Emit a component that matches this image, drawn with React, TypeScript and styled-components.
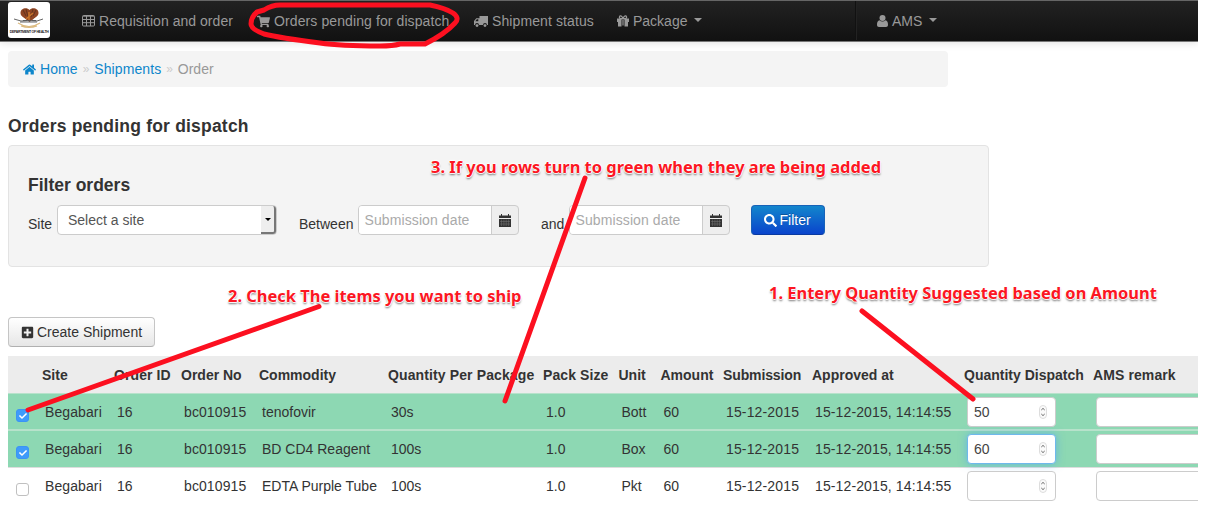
import React from 'react';
import styled, { createGlobalStyle, css } from 'styled-components';
import { FaShoppingCart, FaHome, FaSearch, FaPlusSquare, FaCheck } from 'react-icons/fa';

const GlobalStyle = createGlobalStyle`
  *, *::before, *::after { box-sizing: border-box; }
  body {
    margin: 0;
    background: #fff;
    color: #333;
    font: 14px/20px "Liberation Sans", Arial, sans-serif;
    overflow: hidden;
  }
`;

const Page = styled.div`
  position: relative;
  width: 1229px;
  height: 511px;
  overflow: hidden;
`;

const Screen = styled.div`
  width: 1198px;
  height: 511px;
  overflow: hidden;
`;

const Navbar = styled.nav`
  display: flex;
  height: 42px;
  width: 1198px;
  border-top: 1px solid #666;
  border-bottom: 1px solid #777;
  background: linear-gradient(#222, #111);
  box-shadow: 0 1px 8px rgba(0, 0, 0, 0.12);
  color: #999;
`;

const Brand = styled.div`
  flex: none;
  width: 42px;
  height: 36px;
  margin: 1px 0 0 8px;
  background: #fff;
  border-radius: 3px;
  overflow: hidden;
`;

const NavItem = styled.a<{ $left: number; $gap?: number }>`
  display: flex;
  align-items: center;
  gap: ${(p) => p.$gap ?? 4}px;
  height: 40px;
  margin-left: ${(p) => p.$left}px;
  white-space: nowrap;
  svg { flex: none; }
`;

const NavLabel = styled.span<{ $width: number; $track?: number }>`
  width: ${(p) => p.$width}px;
  letter-spacing: ${(p) => p.$track ?? 0}px;
`;

const Divider = styled.span`
  width: 2px;
  height: 39px;
  margin-left: 153px;
  background: #111;
  border-right: 1px solid #222;
`;

const Caret = styled.i`
  width: 0;
  height: 0;
  margin: -2px 0 0 3px;
  border: 4px solid transparent;
  border-top-color: #999;
  border-bottom: 0;
`;

const Breadcrumb = styled.div`
  display: flex;
  align-items: center;
  width: 940px;
  height: 36px;
  margin: 9px 0 0 8px;
  padding: 0 15px;
  background: #f4f4f4;
  border-radius: 4px;
  color: #999;
`;

const Crumb = styled.a`
  display: flex;
  align-items: center;
  gap: 4px;
  color: #0d86cb;
  letter-spacing: 0.1px;
`;

const Sep = styled.span`
  width: 16.5px;
  text-align: center;
  color: #ccc;
  font-size: 12px;
`;

const Title = styled.h1`
  margin: 28px 0 0 8px;
  font-size: 17.5px;
  line-height: 22px;
  letter-spacing: 0.2px;
`;

const Well = styled.section`
  width: 981px;
  height: 122px;
  margin: 8px 0 0 8px;
  padding: 28px 19px;
  background: #f4f4f4;
  border: 1px solid #e3e3e3;
  border-radius: 4px;
`;

const WellTitle = styled.h2`
  margin: 0 0 9px;
  font-size: 17.5px;
  line-height: 22px;
`;

const FilterRow = styled.div`
  display: flex;
  align-items: flex-start;
`;

const Label = styled.label<{ $width: number; $left?: number }>`
  width: ${(p) => p.$width}px;
  margin: 9px 0 0 ${(p) => p.$left ?? 0}px;
`;

const Select = styled.div`
  display: flex;
  justify-content: space-between;
  width: 220px;
  height: 30px;
  padding-left: 10px;
  line-height: 29px;
  background: #fff;
  border: 1px solid #ccc;
  border-radius: 4px;
  color: #555;
`;

const SelectButton = styled.span`
  display: flex;
  align-items: center;
  justify-content: center;
  width: 15px;
  background: #eee;
  border-right: 2px solid #777;
  border-bottom: 2px solid #777;
  border-radius: 0 3px 3px 0;
  &::after {
    content: '';
    border: 3px solid transparent;
    border-top-color: #000;
    border-bottom: 0;
  }
`;

const DateField = styled.div`
  display: flex;
  width: 161px;
  height: 30px;
  border: 1px solid #ccc;
  border-radius: 4px;
  background: #eee;
  overflow: hidden;
`;

const DateInput = styled.span`
  width: 133px;
  padding-left: 5.5px;
  line-height: 29px;
  letter-spacing: 0.1px;
  background: #fff;
  border-right: 1px solid #ccc;
  color: #aaa;
`;

const DateAddon = styled.span`
  display: flex;
  flex: 1;
  align-items: center;
  justify-content: center;
`;

const buttonBase = css`
  display: flex;
  align-items: center;
  gap: 3px;
  height: 30px;
  padding: 0 0 0 12px;
  border-radius: 4px;
  font: inherit;
`;

const FilterButton = styled.button`
  ${buttonBase}
  width: 74px;
  margin-left: 20.5px;
  border: 1px solid #1762b8;
  border-bottom-color: #0a3aa0;
  background: linear-gradient(#1386cc, #0a44cc);
  color: #fff;
  text-shadow: 0 -1px 0 rgba(0, 0, 0, 0.25);
`;

const CreateButton = styled.button`
  ${buttonBase}
  width: 147px;
  margin: 50px 0 0 8px;
  border: 1px solid #c5c5c5;
  border-bottom-color: #b0b0b0;
  background: linear-gradient(#fff, #e6e6e6);
  color: #333;
`;

const Table = styled.div`
  width: 1300px;
  margin: 9px 0 0 8px;
`;

const Row = styled.div<{ $state?: 'head' | 'checked'; $first?: boolean }>`
  display: grid;
  grid-template-columns: 34px 72px 67px 78px 129px 155px 75.5px 42px 62.5px 89px 152px 129px 1fr;
  height: 37px;
  line-height: 37px;
  border-top: 1px solid #ddd;
  white-space: nowrap;
  ${(p) =>
    p.$state === 'head' &&
    css`
      font-weight: bold;
      background: #ececec;
      border-top-color: #ececec;
    `}
  ${(p) =>
    p.$state === 'checked' &&
    css`
      height: ${p.$first ? 36 : 38}px;
      background: #8dd8b3;
      border-top: ${p.$first ? 1 : 2}px solid #b7e2cb;
    `}
`;

const Cell = styled.span<{ $track?: number }>`
  padding-left: 3px;
  letter-spacing: ${(p) => p.$track ?? 0}px;
`;

const HeadCell = styled.span<{ $track?: number }>`
  letter-spacing: ${(p) => p.$track ?? 0}px;
`;

const Checkbox = styled.span<{ $on: boolean }>`
  display: flex;
  align-items: center;
  justify-content: center;
  width: 13px;
  height: 13px;
  margin: 15px 0 0 8px;
  border: 1px solid ${(p) => (p.$on ? '#3b94f5' : '#c0c0c0')};
  border-radius: 3px;
  background: ${(p) => (p.$on ? '#3f9bfa' : '#fff')};
  color: #fff;
`;

const Input = styled.span<{ $width: number; $focus?: boolean }>`
  display: flex;
  align-items: center;
  justify-content: space-between;
  width: ${(p) => p.$width}px;
  height: 30px;
  margin: 3px 0 0 3px;
  padding: 0 8px 0 6px;
  border: 1px solid ${(p) => (p.$focus ? '#6fb8ec' : '#ccc')};
  border-radius: 4px;
  background: #fff;
  box-shadow: ${(p) => (p.$focus ? '0 0 8px rgba(82, 168, 236, 0.7)' : 'none')};
  color: #444;
`;

const Notes = styled.div`
  position: absolute;
  inset: 0;
`;

const Note = styled.span<{ $x: number; $y: number }>`
  position: absolute;
  left: ${(p) => p.$x}px;
  top: ${(p) => p.$y}px;
  font: bold 16.45px/22px "Noto Sans", sans-serif;
  color: #fc1623;
  white-space: nowrap;
  text-shadow: -1px 0 1px #fff, 1px 0 1px #fff, 0 -1px 1px #fff, 0 1px 1px #fff, 0 2px 2px rgba(0, 0, 0, 0.55);
`;

const Strokes = styled.svg`
  position: absolute;
  inset: 0;
  fill: none;
  stroke: #fc1020;
  stroke-linecap: round;
  stroke-linejoin: round;
`;

const Emblem = () => (
  <svg width="42" height="36" viewBox="0 0 42 36">
    <path d="M21.500 8C19 5 12.500 6 12.500 11c0 3 3 4 5 6l4 3 4-3c2-2 5-3 5-6 0-5-6.500-6-9-3z" fill="#8f4524" />
    <path d="M15 8l3 6M18 7l2 8M28 8l-3 6M25 7l-2 8" stroke="#58301c" strokeWidth=".8" />
    <path d="M21 10v8M18 17l7-6" stroke="#c9762c" strokeWidth="1.5" />
    <path d="M6 17l7 2 8-.5 8 .5 6-2M12 20h17M15 18.500h4M24 18.500h4" fill="none" stroke="#555" strokeWidth=".9" />
    <path d="M10 21q11 7 22 0M13 24q8 3 16 0" fill="none" stroke="#dcbb80" strokeWidth="1.2" />
    <text x="1.8" y="30.8" fontFamily="Liberation Sans" fontWeight="bold" fontSize="3.5" textLength="39" fill="#222">
      DEPARTMENT OF HEALTH
    </text>
  </svg>
);

const TableIcon = () => (
  <svg width="13" height="12" viewBox="0 0 13 12" fill="none" stroke="currentColor">
    <rect x=".5" y=".5" width="12" height="10.5" rx="1" />
    <path d="M1 1.2h11M1 4.5h11M1 7.7h11M4.5 1v10M8.5 1v10" />
  </svg>
);

const TruckIcon = () => (
  <svg width="14" height="13" viewBox="0 0 14 13" fill="currentColor">
    <path d="M5.5 1H14v9h-1a2 2 0 0 0-4 0H5a2 2 0 0 0-4 0H0V6l2.3-2.7H5.5zM1.3 6.2h3V4.3H2.8z" fillRule="evenodd" />
    <circle cx="3" cy="10.6" r="1.4" />
    <circle cx="11" cy="10.6" r="1.4" />
  </svg>
);

const GiftIcon = () => (
  <svg width="12" height="12" viewBox="0 0 12 12" fill="currentColor">
    <path d="M0 3.500h12V7h-1v4.500H7.500v-7h-3v7H1V7H0z" />
    <path d="M5.400 5h1.200v5.500H5.400z" />
    <path d="M5.800 3.500H3.600a1.300 1.300 0 1 1 1-2.200L6 3l1.400-1.700a1.300 1.300 0 1 1 1 2.200z" fill="none" stroke="currentColor" strokeWidth="1.2" />
  </svg>
);

const UserIcon = () => (
  <svg width="11" height="12" viewBox="0 0 11 12" fill="currentColor">
    <circle cx="5.500" cy="3" r="3" />
    <path d="M2.600 5.300a4 4 0 0 0 5.800 0C10.300 5.500 11 7.500 11 9.700 11 11 10.200 12 9 12H2c-1.200 0-2-1-2-2.300 0-2.200.7-4.200 2.600-4.400z" />
  </svg>
);

const CalendarIcon = () => (
  <svg width="12" height="13" viewBox="0 0 12 13">
    <path d="M0 1.500h2V0h1v1.500h6V0h1v1.500h2V4H0zM0 5h12v8H0z" fill="#333" />
    <path d="M2.500 5.500V12M4.900 5.500V12M7.200 5.500V12M9.600 5.500V12M1 7.500h10M1 10h10" stroke="#777" strokeWidth=".5" />
  </svg>
);

const Spinner = () => (
  <svg width="8" height="14" viewBox="0 0 8 14" fill="none">
    <rect x=".5" y=".5" width="7" height="13" rx="3.500" fill="#fafafa" stroke="#ddd" />
    <path d="M2.300 5L4 3.400 5.700 5M2.300 9L4 10.600 5.700 9" stroke="#666" />
  </svg>
);

const headings: { label: string; track?: number }[] = [
  { label: 'Site' },
  { label: 'Order ID', track: 0.1 },
  { label: 'Order No' },
  { label: 'Commodity' },
  { label: 'Quantity Per Package', track: 0.12 },
  { label: 'Pack Size', track: 0.1 },
  { label: 'Unit' },
  { label: 'Amount' },
  { label: 'Submission', track: -0.12 },
  { label: 'Approved at' },
  { label: 'Quantity Dispatch' },
  { label: 'AMS remark', track: 0.1 },
];

const orders = [
  { item: 'tenofovir', pack: '30s', unit: 'Bott', qty: '50', on: true },
  { item: 'BD CD4 Reagent', pack: '100s', unit: 'Box', qty: '60', on: true, focus: true },
  { item: 'EDTA Purple Tube', pack: '100s', unit: 'Pkt', qty: '', on: false },
];

export default function App() {
  return (
    <Page>
      <GlobalStyle />
      <Screen>
        <Navbar>
          <Brand><Emblem /></Brand>
          <NavItem $left={32}><TableIcon /><NavLabel $width={135} $track={0.04}>Requisition and order</NavLabel></NavItem>
          <NavItem $left={23}><FaShoppingCart size={13} /><NavLabel $width={176} $track={0.1}>Orders pending for dispatch</NavLabel></NavItem>
          <NavItem $left={24}><TruckIcon /><NavLabel $width={102} $track={0.1}>Shipment status</NavLabel></NavItem>
          <NavItem $left={23}><GiftIcon /><NavLabel $width={54}>Package</NavLabel><Caret /></NavItem>
          <Divider />
          <NavItem $left={20}><UserIcon /><NavLabel $width={30}>AMS</NavLabel><Caret /></NavItem>
        </Navbar>
        <Breadcrumb>
          <Crumb><FaHome size={13} />Home</Crumb>
          <Sep>»</Sep>
          <Crumb>Shipments</Crumb>
          <Sep>»</Sep>
          <span>Order</span>
        </Breadcrumb>
        <Title>Orders pending for dispatch</Title>
        <Well>
          <WellTitle>Filter orders</WellTitle>
          <FilterRow>
            <Label $width={29}>Site</Label>
            <Select>Select a site<SelectButton /></Select>
            <Label $width={59} $left={22}>Between</Label>
            <DateField><DateInput>Submission date</DateInput><DateAddon><CalendarIcon /></DateAddon></DateField>
            <Label $width={28} $left={22}>and</Label>
            <DateField><DateInput>Submission date</DateInput><DateAddon><CalendarIcon /></DateAddon></DateField>
            <FilterButton><FaSearch size={13} />Filter</FilterButton>
          </FilterRow>
        </Well>
        <CreateButton><FaPlusSquare size={13} />Create Shipment</CreateButton>
        <Table>
          <Row $state="head">
            <span />
            {headings.map((h) => <HeadCell key={h.label} $track={h.track}>{h.label}</HeadCell>)}
          </Row>
          {orders.map((o, i) => (
            <Row key={o.item} $state={o.on ? 'checked' : undefined} $first={i === 0}>
              <Checkbox $on={o.on}>{o.on && <FaCheck size={8} />}</Checkbox>
              <Cell $track={0.1}>Begabari</Cell>
              <Cell>16</Cell>
              <Cell $track={0.1}>bc010915</Cell>
              <Cell>{o.item}</Cell>
              <Cell>{o.pack}</Cell>
              <Cell>1.0</Cell>
              <Cell>{o.unit}</Cell>
              <Cell>60</Cell>
              <Cell $track={0.15}>15-12-2015</Cell>
              <Cell $track={0.12}>15-12-2015, 14:14:55</Cell>
              <Input $width={89} $focus={o.focus}>{o.qty || <i />}<Spinner /></Input>
              <Input $width={206} />
            </Row>
          ))}
        </Table>
      </Screen>
      <Notes>
        <Strokes width="1229" height="511">
          <path strokeWidth="5" d="M264 10Q272 5 280 5H430Q445 8 453 13Q460 18 455 23Q445 34 425 44H400Q393 46 380 46Q340 46 320 43Q280 38 264 34Q251 29 251 24Q251 17 257 12L264 10" />
          <path strokeWidth="5" d="M319 306.500L28 410M585 178L505 401M862 311L973 399" />
        </Strokes>
        <Note $x={431} $y={156}>3. If you rows turn to green when they are being added</Note>
        <Note $x={228} $y={285}>2. Check The items you want to ship</Note>
        <Note $x={769} $y={282}>1. Entery Quantity Suggested based on Amount</Note>
      </Notes>
    </Page>
  );
}
